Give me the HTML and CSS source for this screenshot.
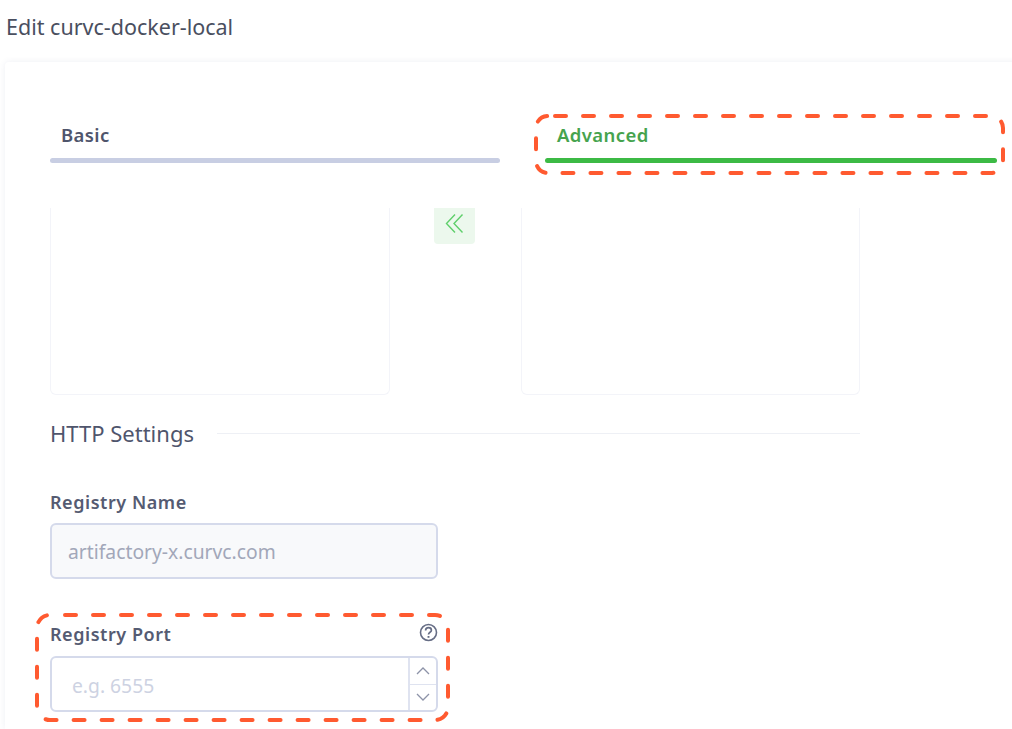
FILE: index.html
```html
<!DOCTYPE html>
<html lang="en">
<head>
<meta charset="utf-8">
<title>Edit curvc-docker-local</title>
<link rel="stylesheet" href="styles.css">
</head>
<body>
<div class="page">
  <h1 class="title">Edit curvc-docker-local</h1>
  <main class="panel">
    <div class="tabs">
      <div class="tab tab-basic"><span class="tab-label">Basic</span><div class="tab-bar"></div></div>
      <div class="tab tab-advanced"><span class="tab-label">Advanced</span><div class="tab-bar"></div></div>
    </div>
    <div class="scroll">
      <div class="transfer">
        <div class="list"></div>
        <div class="transfer-mid">
          <button class="move" type="button" aria-label="Move left">
            <svg width="20" height="22" viewBox="0 0 20 22" fill="none" stroke="#5fcf6b" stroke-width="1.4"><path d="M10 1.5 1.5 10.5 10 19.5"/><path d="M17.5 1.5 9 10.5 17.5 19.5"/></svg>
          </button>
        </div>
        <div class="list"></div>
      </div>
      <div class="section"><span class="section-title">HTTP Settings</span><span class="section-rule"></span></div>
      <div class="field field-name">
        <label class="label">Registry Name</label>
        <div class="input input-disabled"><span class="value">artifactory-x.curvc.com</span></div>
      </div>
      <div class="field field-port">
        <div class="label-row">
          <label class="label">Registry Port</label>
          <svg class="help" width="19" height="19" viewBox="0 0 19 19" fill="none" stroke="#666d85"><circle cx="9.5" cy="9.5" r="8" stroke-width="1.6"/><path d="M6.6 7.6c0-1.8 1.2-2.9 2.9-2.9s2.9 1.1 2.9 2.5c0 2.1-2.9 2-2.9 4.3" stroke-width="1.7"/><path d="M9.5 13v1.8" stroke-width="1.9"/></svg>
        </div>
        <div class="input input-number">
          <span class="placeholder">e.g. 6555</span>
          <div class="spin">
            <div class="spin-btn"><svg width="14" height="8" viewBox="0 0 14 8" fill="none" stroke="#8d93a8" stroke-width="1.3"><path d="M1 7l6-6 6 6"/></svg></div>
            <div class="spin-btn"><svg width="14" height="8" viewBox="0 0 14 8" fill="none" stroke="#8d93a8" stroke-width="1.3"><path d="M1 1l6 6 6-6"/></svg></div>
          </div>
        </div>
      </div>
    </div>
  </main>
  <svg class="callouts" width="1012" height="729" viewBox="0 0 1012 729" fill="none" stroke="#ff5a30" stroke-width="4" stroke-linecap="round" stroke-dasharray="11 17">
    <rect x="536" y="116" width="467" height="57" rx="12" stroke-dashoffset="-7"/>
    <rect x="37" y="615" width="411" height="105" rx="13" stroke-dashoffset="-15"/>
  </svg>
</div>
</body>
</html>
```

FILE: styles.css
```css
* { box-sizing: border-box; }
html, body { margin: 0; height: 100%; background: #fff; overflow: hidden; }
body { font-family: "Noto Sans", "Open Sans", sans-serif; color: #4c5268; }
.page { position: relative; width: 1012px; height: 729px; overflow: hidden; }
.title { margin: 0; padding: 12px 0 0 6px; height: 62px; font-size: 21.5px; line-height: 30px; font-weight: 400; color: #4a4f5f; }
.panel { margin-left: 5px; width: 1040px; height: 667px; padding: 56px 45px 0; background: #fff; border-radius: 4px 0 0 0; box-shadow: 0 0 6px rgba(70, 80, 130, 0.09); }
.tabs { display: flex; width: 947px; }
.tab { display: flex; flex-direction: column; }
.tab-basic { width: 450px; }
.tab-advanced { width: 452px; margin-left: 45px; }
.tab-label { height: 40px; padding-left: 11px; font-size: 18.5px; line-height: 34px; font-weight: 600; letter-spacing: 0.4px; color: #4f556c; }
.tab-advanced .tab-label { padding-left: 12px; color: #46a34e; }
.tab-bar { height: 5px; border-radius: 3px; background: #c8cee3; }
.tab-advanced .tab-bar { background: #3cba45; }
.scroll { padding-top: 45px; width: 810px; }
.transfer { display: grid; grid-template-columns: 340px 131px 339px; height: 187px; }
.list { border: 1px solid #f3f4f9; border-top: 0; border-radius: 0 0 6px 6px; }
.transfer-mid { display: flex; padding-left: 44px; align-items: flex-start; }
.move { width: 41px; height: 36px; padding: 0 0 4px 0; display: flex; align-items: center; justify-content: center; border: 0; border-radius: 0 0 4px 4px; background: #ecf8ed; }
.section { display: flex; align-items: center; gap: 23px; margin-top: 22px; height: 33px; }
.section-title { font-size: 22px; line-height: 30px; padding-bottom: 2px; font-weight: 400; color: #4f556c; white-space: nowrap; }
.section-rule { flex: 1; height: 1px; background: #eef0f5; }
.field { width: 388px; }
.field-name { margin-top: 41px; }
.field-port { margin-top: 44px; }
.label { display: block; font-size: 18px; line-height: 22px; font-weight: 600; letter-spacing: 0.55px; color: #555b72; }
.field-name .label { height: 24px; margin-bottom: 8px; }
.label-row { display: flex; justify-content: space-between; align-items: flex-start; height: 24px; margin-bottom: 9px; }
.help { margin-top: 0; margin-right: 0; }
.input { display: flex; align-items: center; width: 388px; height: 56px; border: 2px solid #d5daeb; border-radius: 6px; font-size: 19.3px; }
.input-disabled { background: #f8f9fb; padding-left: 16px; }
.value { color: #a2a7b9; }
.input-number { padding-left: 20px; justify-content: space-between; }
.placeholder { padding-top: 2px; color: #cdd2e2; }
.spin { width: 28px; height: 100%; border-left: 2px solid #dfe3f0; display: flex; flex-direction: column; }
.spin-btn { flex: 1; display: flex; align-items: center; justify-content: center; }
.spin-btn + .spin-btn { border-top: 1px solid #dfe3f0; }
.callouts { position: absolute; left: 0; top: 0; pointer-events: none; }
```
